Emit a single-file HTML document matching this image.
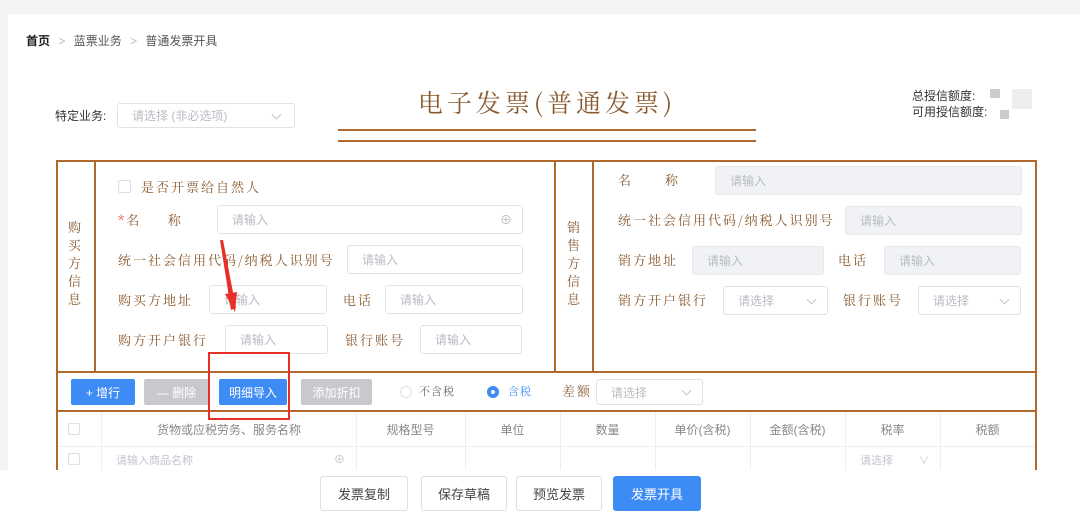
<!DOCTYPE html>
<html><head><meta charset="utf-8"><style>
*{box-sizing:border-box;margin:0;padding:0}
body{width:1080px;height:513px;background:#f4f4f5;font-family:"Liberation Sans","Noto Sans CJK SC",sans-serif;position:relative;overflow:hidden}
.a{position:absolute}
.card{left:8px;top:14px;width:1072px;height:460px;background:#fff}
.bot{left:0;top:470px;width:1080px;height:43px;background:#fff}
.k{font-family:"Noto Serif CJK SC",serif;color:#8a5a2e;font-size:13px;letter-spacing:2px;white-space:nowrap}
.in{border:1px solid #e0e2e6;border-radius:3px;background:#fff;font-size:12px;color:#b8bbc2;padding-left:14px;display:flex;align-items:center}
.dis{background:#f0f2f5;border-color:#e6e8ec}
.ln{background:#b0692c}
.btn{border-radius:2px;font-size:12px;color:#fff;display:flex;align-items:center;justify-content:center}
.blue{background:#3d8bf5}.gray{background:#c8c9cc}
.th{font-size:12px;color:#888;display:flex;align-items:center;justify-content:center;height:34px}
.chev{position:absolute;right:12px;top:50%;width:7px;height:7px;border-right:1px solid #c0c4cc;border-bottom:1px solid #c0c4cc;transform:translateY(-70%) rotate(45deg)}
.bb{border:1px solid #dcdfe6;border-radius:3px;background:#fff;font-size:13px;color:#444;display:flex;align-items:center;justify-content:center}
</style></head><body>
<div class="a card"></div>
<div class="a bot"></div>
<div class="a" style="left:26px;top:32px;font-size:12px;color:#555"><b style="color:#222">首页</b> <span style="color:#bbb;margin:0 5px">&gt;</span> 蓝票业务 <span style="color:#bbb;margin:0 5px">&gt;</span> 普通发票开具</div>
<div class="a" style="left:55px;top:107px;font-size:12px;color:#333">特定业务:</div>
<div class="a in" style="left:117px;top:103px;width:178px;height:25px">请选择 (非必选项)<i class="chev" style="right:14px"></i></div>
<div class="a" style="left:338px;top:84px;width:418px;text-align:center;font-family:'Noto Serif CJK SC',serif;color:#8a5a2e;font-size:25px;letter-spacing:4px">电子发票(普通发票)</div>
<div class="a ln" style="left:338px;top:129px;width:418px;height:2px"></div>
<div class="a ln" style="left:338px;top:140px;width:418px;height:2px"></div>
<div class="a" style="left:912px;top:88px;font-size:12px;color:#333;line-height:16px">总授信额度:<br>可用授信额度:</div>
<div class="a" style="left:990px;top:89px;width:10px;height:9px;background:#ccc"></div>
<div class="a" style="left:1012px;top:89px;width:20px;height:20px;background:#eee"></div>
<div class="a" style="left:1000px;top:110px;width:9px;height:9px;background:#ccc"></div>

<!-- box -->
<div class="a" style="left:56px;top:160px;width:981px;height:311px;border:2px solid #b0692c;border-bottom:none"></div>
<div class="a ln" style="left:94px;top:160px;width:2px;height:212px"></div>
<div class="a ln" style="left:554px;top:160px;width:2px;height:212px"></div>
<div class="a ln" style="left:592px;top:160px;width:2px;height:212px"></div>
<div class="a ln" style="left:56px;top:371px;width:981px;height:2px"></div>
<div class="a ln" style="left:56px;top:410px;width:981px;height:2px"></div>
<div class="a k" style="left:68px;top:218px;width:16px;line-height:18px;white-space:normal">购买方信息</div>
<div class="a k" style="left:567px;top:218px;width:16px;line-height:18px;white-space:normal">销售方信息</div>

<div class="a" style="left:118px;top:180px;width:13px;height:13px;border:1px solid #dcdfe6;border-radius:2px"></div>
<div class="a k" style="left:141px;top:177px">是否开票给自然人</div>
<div class="a k" style="left:118px;top:210px"><span style="color:#e33">*</span>名&nbsp;&nbsp;&nbsp;&nbsp;&nbsp;称</div>
<div class="a in" style="left:217px;top:205px;width:306px;height:29px">请输入<span style="position:absolute;right:10px;color:#bbb">⊕</span></div>
<div class="a k" style="left:118px;top:250px">统一社会信用代码/纳税人识别号</div>
<div class="a in" style="left:347px;top:245px;width:176px;height:29px">请输入</div>
<div class="a k" style="left:118px;top:290px">购买方地址</div>
<div class="a in" style="left:209px;top:285px;width:118px;height:29px">请输入</div>
<div class="a k" style="left:343px;top:290px">电话</div>
<div class="a in" style="left:385px;top:285px;width:138px;height:29px">请输入</div>
<div class="a k" style="left:118px;top:330px">购方开户银行</div>
<div class="a in" style="left:225px;top:325px;width:103px;height:29px">请输入</div>
<div class="a k" style="left:345px;top:330px">银行账号</div>
<div class="a in" style="left:420px;top:325px;width:102px;height:29px">请输入</div>

<div class="a k" style="left:618px;top:170px">名&nbsp;&nbsp;&nbsp;&nbsp;&nbsp;&nbsp;称</div>
<div class="a in dis" style="left:715px;top:166px;width:307px;height:29px">请输入</div>
<div class="a k" style="left:618px;top:210px">统一社会信用代码/纳税人识别号</div>
<div class="a in dis" style="left:845px;top:206px;width:177px;height:29px">请输入</div>
<div class="a k" style="left:618px;top:250px">销方地址</div>
<div class="a in dis" style="left:692px;top:246px;width:132px;height:29px">请输入</div>
<div class="a k" style="left:838px;top:250px">电话</div>
<div class="a in dis" style="left:884px;top:246px;width:137px;height:29px">请输入</div>
<div class="a k" style="left:618px;top:290px">销方开户银行</div>
<div class="a in" style="left:723px;top:286px;width:105px;height:29px">请选择<i class="chev"></i></div>
<div class="a k" style="left:843px;top:290px">银行账号</div>
<div class="a in" style="left:918px;top:286px;width:103px;height:29px">请选择<i class="chev"></i></div>

<!-- toolbar -->
<div class="a btn blue" style="left:71px;top:379px;width:64px;height:26px">+ 增行</div>
<div class="a btn gray" style="left:144px;top:379px;width:65px;height:26px">— 删除</div>
<div class="a btn blue" style="left:219px;top:379px;width:68px;height:26px">明细导入</div>
<div class="a btn gray" style="left:301px;top:379px;width:71px;height:26px">添加折扣</div>
<div class="a" style="left:400px;top:386px;width:12px;height:12px;border:1px solid #dcdfe6;border-radius:50%"></div>
<div class="a k" style="left:419px;top:383px;font-size:11px;letter-spacing:1px;color:#666">不含税</div>
<div class="a" style="left:487px;top:386px;width:12px;height:12px;border:4px solid #3d8bf5;border-radius:50%"></div>
<div class="a k" style="left:508px;top:383px;font-size:11px;letter-spacing:1px;color:#3d8bf5">含税</div>
<div class="a k" style="left:562px;top:381px">差额</div>
<div class="a in" style="left:596px;top:379px;width:107px;height:26px">请选择<i class="chev"></i></div>
<div class="a" style="left:208px;top:352px;width:82px;height:68px;border:2px solid #e8302a"></div>
<svg class="a" style="left:210px;top:236px" width="40" height="80"><polygon points="10,4 13,4 26,72 21,74" fill="#e8302a"/><polygon points="15,58 27,56 25,76" fill="#e8302a"/></svg>

<!-- table -->
<div class="a" style="left:58px;top:412px;width:977px;height:60px">
 <div class="a" style="left:0;top:34px;width:977px;height:1px;background:#ebeef5"></div>
 <div class="a th" style="left:44px;width:254px">货物或应税劳务、服务名称</div>
 <div class="a th" style="left:298px;width:109px">规格型号</div>
 <div class="a th" style="left:407px;width:95px">单位</div>
 <div class="a th" style="left:502px;width:95px">数量</div>
 <div class="a th" style="left:597px;width:95px">单价(含税)</div>
 <div class="a th" style="left:692px;width:95px">金额(含税)</div>
 <div class="a th" style="left:787px;width:95px">税率</div>
 <div class="a th" style="left:882px;width:95px">税额</div>
 <div class="a" style="left:43px;top:0;width:1px;height:60px;background:#ebeef5"></div>
 <div class="a" style="left:298px;top:0;width:1px;height:60px;background:#ebeef5"></div>
 <div class="a" style="left:407px;top:0;width:1px;height:60px;background:#ebeef5"></div>
 <div class="a" style="left:502px;top:0;width:1px;height:60px;background:#ebeef5"></div>
 <div class="a" style="left:597px;top:0;width:1px;height:60px;background:#ebeef5"></div>
 <div class="a" style="left:692px;top:0;width:1px;height:60px;background:#ebeef5"></div>
 <div class="a" style="left:787px;top:0;width:1px;height:60px;background:#ebeef5"></div>
 <div class="a" style="left:882px;top:0;width:1px;height:60px;background:#ebeef5"></div>
 <div class="a" style="left:10px;top:11px;width:12px;height:12px;border:1px solid #dcdfe6;border-radius:2px"></div>
 <div class="a" style="left:10px;top:41px;width:12px;height:12px;border:1px solid #dcdfe6;border-radius:2px"></div>
 <div class="a" style="left:58px;top:40px;font-size:11px;color:#c0c4cc">请输入商品名称</div>
 <div class="a" style="left:276px;top:39px;font-size:11px;color:#c0c4cc">⊕</div>
 <div class="a" style="left:802px;top:40px;font-size:11px;color:#c0c4cc">请选择</div>
 <div class="a" style="left:861px;top:40px;font-size:10px;color:#c0c4cc">∨</div>
</div>
<div class="a" style="left:0;top:470px;width:1080px;height:43px;background:#fff"></div>
<div class="a bb" style="left:320px;top:476px;width:88px;height:35px">发票复制</div>
<div class="a bb" style="left:421px;top:476px;width:86px;height:35px">保存草稿</div>
<div class="a bb" style="left:516px;top:476px;width:86px;height:35px">预览发票</div>
<div class="a btn blue" style="left:613px;top:476px;width:88px;height:35px;font-size:13px;border-radius:3px">发票开具</div>
</body></html>
